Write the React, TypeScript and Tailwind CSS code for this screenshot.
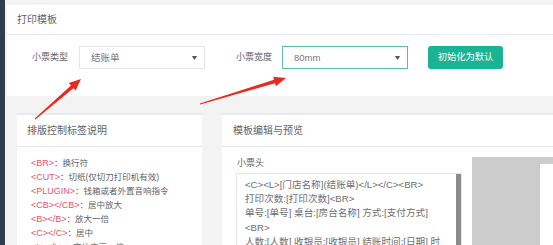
import React from "react";

const F = "font-['Liberation_Sans','Noto_Sans_CJK_SC',sans-serif]";

function Caret() {
  return (
    <svg width="5" height="4" viewBox="0 0 5 4" className="shrink-0">
      <path d="M0 0 L5 0 L2.5 4 Z" fill="#555" />
    </svg>
  );
}

function FakeSelect({ value, active }: { value: string; active?: boolean }) {
  return (
    <div
      className={`w-[126px] h-[23px] flex items-center justify-between pl-[11px] pr-[7px] bg-white border ${
        active ? "border-[#5cbda4]" : "border-[#e5e6e7]"
      }`}
    >
      <span className="text-[9.5px] text-[#777] leading-none">{value}</span>
      <Caret />
    </div>
  );
}

const tags: [string, string][] = [
  ["<BR>", "换行符"],
  ["<CUT>", "切纸(仅切刀打印机有效)"],
  ["<PLUGIN>", "钱箱或者外置音响指令"],
  ["<CB></CB>", "居中放大"],
  ["<B></B>", "放大一倍"],
  ["<C></C>", "居中"],
  ["<L></L>", "字体变高一倍"],
];

const lines = [
  "<C><L>[门店名称](结账单)</L></C><BR>",
  "打印次数:[打印次数]<BR>",
  "单号:[单号] 桌台:[房台名称] 方式:[支付方式]",
  "<BR>",
  "人数:[人数] 收银员:[收银员] 结账时间:[日期] 时",
  "间:[时间]<BR>",
];

export default function App() {
  return (
    <div className={`relative w-[553px] h-[245px] overflow-hidden flex bg-[#f3f3f4] ${F} text-[#5f6264]`}>
      <div className="w-[5px] shrink-0 bg-[#2f3d4c]" />
      <div className="flex-1 flex flex-col min-w-0">
        {/* top panel */}
        <div className="mt-[5px] ml-[2px] bg-white shrink-0">
          <div className="h-[30px] border-b border-[#e7eaec] flex items-center pl-[10px] text-[10px]">
            打印模板
          </div>
          <div className="h-[61px] pt-[11px] pl-[25px] flex items-start">
            <div className="h-[23px] flex items-center text-[9px]">小票类型</div>
            <div className="ml-[11px]">
              <FakeSelect value="结账单" />
            </div>
            <div className="ml-[31px] h-[23px] flex items-center text-[9px]">小票宽度</div>
            <div className="ml-[10px]">
              <FakeSelect value="80mm" active />
            </div>
            <div className="ml-[20px] w-[75px] h-[23px] rounded-[3px] bg-[#1ab394] text-white text-[9.3px] flex items-center justify-center">
              初始化为默认
            </div>
          </div>
        </div>

        {/* bottom panels */}
        <div className="mt-[17px] ml-[12px] flex gap-[20px] items-start">
          <div className="w-[185px] shrink-0 bg-white border-t-2 border-[#e7eaec] h-[200px]">
            <div className="h-[32px] border-b border-[#e7eaec] flex items-center pl-[10px] text-[10px]">
              排版控制标签说明
            </div>
            <div className="pt-[9px] pl-[14px] text-[9px] leading-[14px]">
              {tags.map(([t, d]) => (
                <div key={t} className="whitespace-nowrap">
                  <span className="text-[#e4566a]">{t}</span>
                  <span className="text-[8.5px]">：{d}</span>
                </div>
              ))}
            </div>
          </div>

          <div className="flex-1 bg-white border-t-2 border-[#e7eaec] h-[200px] min-w-0">
            <div className="h-[32px] border-b border-[#e7eaec] flex items-center pl-[11px] text-[10px]">
              模板编辑与预览
            </div>
            <div className="pt-[9px] pl-[14px] flex gap-[10px]">
              <div className="w-[226px] shrink-0">
                <div className="text-[9px] leading-[14px] pl-[1px] mb-[3px]">小票头</div>
                <div className="flex border border-[#e5e6e7] h-[90px]">
                  <div className="flex-1 pt-[4px] pl-[8px] text-[9.6px] leading-[14.2px] text-[#6e6e6e] whitespace-nowrap overflow-hidden">
                    {lines.map((l, i) => (
                      <div key={i}>{l}</div>
                    ))}
                  </div>
                  <div className="w-[5px] bg-[#8c8c8c]" />
                </div>
              </div>
              <div className="flex-1 mt-[1px] bg-[#cccccc] h-[100px] pl-[68px] pt-[7px]">
                <div className="bg-white h-full" />
              </div>
            </div>
          </div>
        </div>
      </div>

      {/* annotation arrows */}
      <svg className="absolute inset-0 pointer-events-none" width="553" height="245" viewBox="0 0 553 245">
        <polygon
          points="81,79 75.6,90.5 73.4,88.2 35.3,119.4 34.7,118.6 71,85.6 68.7,83.1"
          fill="#ea2a1e"
        />
        <polygon
          points="286,78 275.9,86.3 275,83.2 200.1,104.6 199.9,103.4 274,79.8 273.1,76.7"
          fill="#ea2a1e"
        />
      </svg>
    </div>
  );
}
